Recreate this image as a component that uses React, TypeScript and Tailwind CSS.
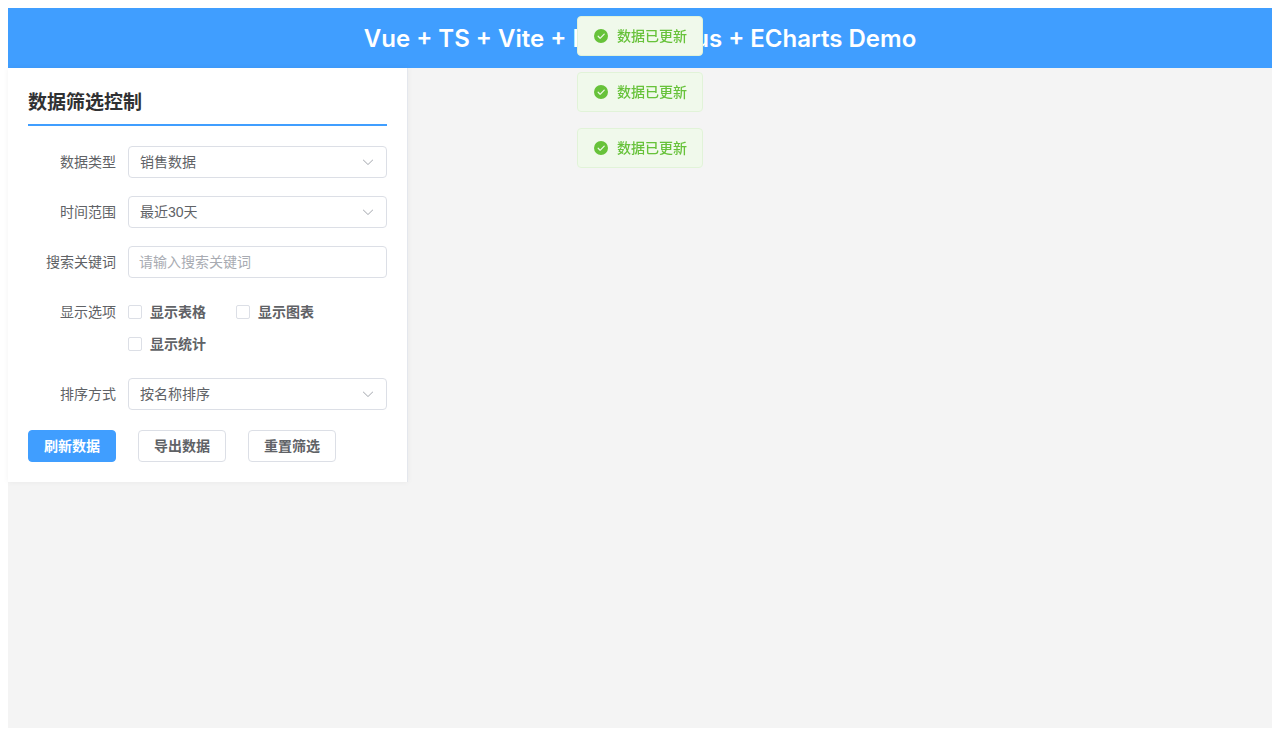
import { useState, type ReactNode } from 'react';

function FormRow({ label, htmlFor, children }: { label: string; htmlFor?: string; children: ReactNode }) {
  const labelClass = 'w-[100px] shrink-0 pr-3 text-right leading-8';
  return (
    <div className="flex items-start">
      {htmlFor ? (
        <label htmlFor={htmlFor} className={labelClass}>
          {label}
        </label>
      ) : (
        <span className={labelClass}>{label}</span>
      )}
      <div className="min-w-0 flex-1">{children}</div>
    </div>
  );
}

function Select({ id, options }: { id: string; options: string[] }) {
  return (
    <div className="relative">
      <select
        id={id}
        className="block h-8 w-full appearance-none rounded-sm border border-[#dcdfe6] bg-white pr-8 pl-[11px] outline-none focus:border-[#409eff]"
      >
        {options.map((option) => (
          <option key={option}>{option}</option>
        ))}
      </select>
      <svg
        viewBox="0 0 1024 1024"
        className="pointer-events-none absolute top-[9px] right-3 size-3.5 text-[#a8abb2]"
        fill="currentColor"
        aria-hidden="true"
      >
        <path d="M831.872 340.864 512 652.672 192.128 340.864a30.592 30.592 0 0 0-42.752 0 29.12 29.12 0 0 0 0 41.6L489.664 714.24a32 32 0 0 0 44.672 0l340.288-331.712a29.12 29.12 0 0 0 0-41.728 30.592 30.592 0 0 0-42.752 0z" />
      </svg>
    </div>
  );
}

function Checkbox({ label }: { label: string }) {
  return (
    <label className="mr-[30px] flex h-8 cursor-pointer items-center gap-2 font-bold">
      <input
        type="checkbox"
        className="size-3.5 appearance-none rounded-[2px] border border-[#dcdfe6] bg-white checked:border-[#409eff] checked:bg-[#409eff]"
      />
      {label}
    </label>
  );
}

function Message({ text }: { text: string }) {
  return (
    <div
      role="alert"
      className="flex h-10 items-center gap-2 rounded-sm border border-[#e1f3d8] bg-[#f0f9eb] px-[15px] leading-[14px] font-medium text-[#67c23a]"
    >
      <svg viewBox="0 0 1024 1024" className="size-4" fill="currentColor" aria-hidden="true">
        <path d="M512 64a448 448 0 1 1 0 896 448 448 0 0 1 0-896zm-55.808 536.384-99.52-99.584a38.4 38.4 0 1 0-54.336 54.336l126.72 126.72a38.272 38.272 0 0 0 54.336 0l262.4-262.464a38.4 38.4 0 1 0-54.272-54.336L456.192 600.384z" />
      </svg>
      <p>{text}</p>
    </div>
  );
}

const buttonClass = 'h-8 cursor-pointer rounded-sm border px-[15px] font-bold leading-[14px]';

export default function App() {
  const [messages] = useState(['数据已更新', '数据已更新', '数据已更新']);

  return (
    <div className="min-h-screen bg-white p-2 font-['Liberation_Sans','Noto_Sans_CJK_SC',sans-serif] text-sm text-[#606266]">
      <div className="flex min-h-[calc(100vh-16px)] flex-col bg-[#f4f4f4]">
        <header className="flex h-[60px] items-center justify-center bg-[#409eff] pt-0.5">
          <h1 className="font-[Inter,sans-serif] text-2xl font-semibold text-white">
            Vue + TS + Vite + Element Plus + ECharts Demo
          </h1>
        </header>

        <main className="flex flex-1 items-start">
          <aside className="w-[400px] border-r border-[#e4e7ed] bg-white p-5 shadow-[0_0_6px_rgba(0,0,0,0.05)]">
            <h2 className="mb-5 border-b-2 border-[#409eff] pt-0.5 pb-2 text-[19px] leading-[26px] font-bold text-[#303133]">
              数据筛选控制
            </h2>
            <form className="flex flex-col gap-[18px]" onSubmit={(event) => event.preventDefault()}>
              <FormRow label="数据类型" htmlFor="data-type">
                <Select id="data-type" options={['销售数据', '用户数据', '产品数据']} />
              </FormRow>
              <FormRow label="时间范围" htmlFor="time-range">
                <Select id="time-range" options={['最近30天', '最近7天', '最近90天']} />
              </FormRow>
              <FormRow label="搜索关键词" htmlFor="keyword">
                <input
                  id="keyword"
                  type="text"
                  placeholder="请输入搜索关键词"
                  className="block h-8 w-full rounded-sm border border-[#dcdfe6] bg-white px-2.5 outline-none placeholder:text-[#a8abb2] focus:border-[#409eff]"
                />
              </FormRow>
              <FormRow label="显示选项">
                <div role="group" aria-label="显示选项" className="flex flex-wrap">
                  <Checkbox label="显示表格" />
                  <Checkbox label="显示图表" />
                  <Checkbox label="显示统计" />
                </div>
              </FormRow>
              <FormRow label="排序方式" htmlFor="sort">
                <Select id="sort" options={['按名称排序', '按数值排序', '按时间排序']} />
              </FormRow>
              <div className="mt-0.5 flex gap-[22px]">
                <button type="button" className={`${buttonClass} border-[#409eff] bg-[#409eff] text-white`}>
                  刷新数据
                </button>
                <button type="button" className={`${buttonClass} border-[#dcdfe6] bg-white`}>
                  导出数据
                </button>
                <button type="button" className={`${buttonClass} border-[#dcdfe6] bg-white`}>
                  重置筛选
                </button>
              </div>
            </form>
          </aside>
        </main>
      </div>

      <div className="fixed top-4 left-1/2 z-20 flex -translate-x-1/2 flex-col gap-4">
        {messages.map((text, index) => (
          <Message key={index} text={text} />
        ))}
      </div>
    </div>
  );
}
